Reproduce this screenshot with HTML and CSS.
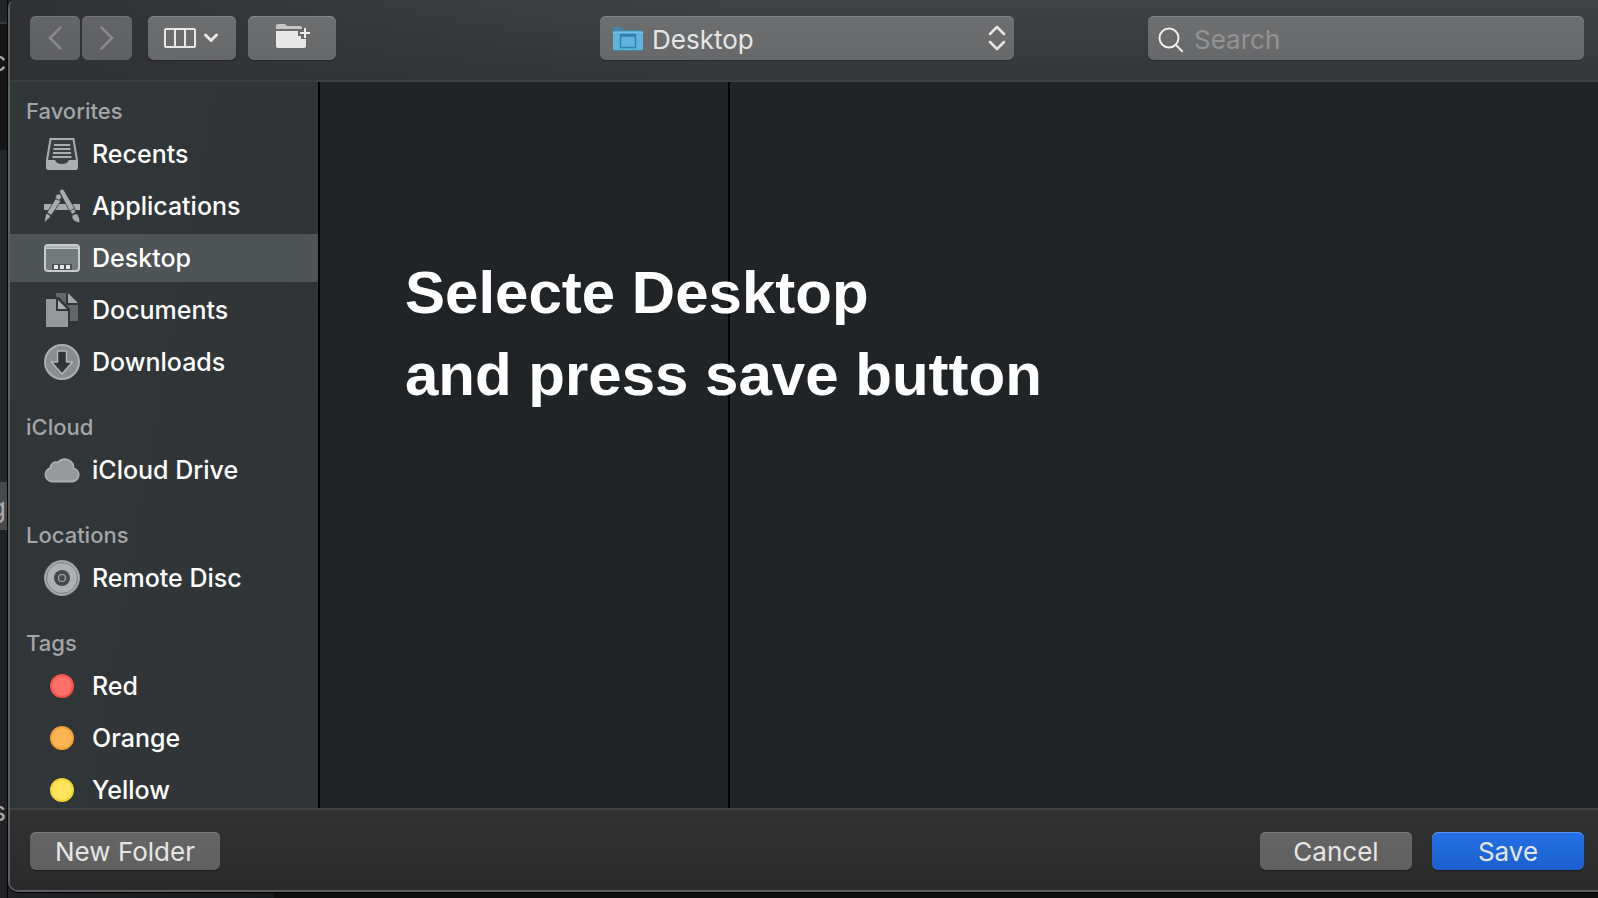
FILE: index.html
```html
<!DOCTYPE html>
<html lang="en">
<head>
<meta charset="utf-8">
<title>Save</title>
<link rel="stylesheet" href="styles.css">
</head>
<body>
<div class="backdrop" aria-hidden="true">
  <div class="back-top"></div>
  <div class="back-dark"><span class="back-text">c</span></div>
  <div class="back-mid"></div>
  <div class="back-selected"><span class="back-text">g</span></div>
  <div class="back-low"><span class="back-text">s</span></div>
</div>
<main class="dialog">
  <header class="toolbar">
    <div class="tools">
      <div class="nav">
        <button class="btn nav-btn" aria-label="Back"><svg width="14" height="24" viewBox="0 0 14 24"><path d="M12.500 1.500 2 12l10.500 10.500"/></svg></button>
        <button class="btn nav-btn" aria-label="Forward"><svg width="14" height="24" viewBox="0 0 14 24"><path d="M1.500 1.500 12 12 1.500 22.500"/></svg></button>
      </div>
      <button class="btn tool-btn" aria-label="View"><svg width="56" height="22" viewBox="0 0 56 22" fill="none" stroke="#e8e8e8" stroke-width="2"><rect x="1" y="2" width="30" height="18" rx="1"/><path d="M11 2v18M21 2v18"/><path d="m41.500 8 5.500 5.500L52.500 8" stroke-width="3" stroke-linecap="round" stroke-linejoin="round"/></svg></button>
      <button class="btn tool-btn" aria-label="New folder"><svg class="new-folder" width="36" height="26" viewBox="0 0 36 26"><path d="M2 6V3q0-2 2-2h7l2 2h13q2 0 2 2v1z" fill="#c6c6c6"/><path d="M2 8h22v5h3v3h5v7q0 2-2 2H4q-2 0-2-2z" fill="#e8e8e8"/><path d="M31 4v12M24 10h12" stroke="#67686a" stroke-width="5"/><path d="M31 5v10M26 10h10" stroke="#eee" stroke-width="2"/></svg></button>
    </div>
    <div class="location">
      <svg class="loc-folder" width="32" height="26" viewBox="0 0 32 26"><path d="M1 6V3q0-2 2-2h6l3 3h17q2 0 2 2v1H1z" fill="#3f86aa"/><path d="M1 6h30v17q0 2-2 2H3q-2 0-2-2z" fill="#5db3dc"/><path d="M1 6h30" stroke="#84cff0"/><path d="M1 24.500h30" stroke="#4587a5"/><path d="M8.500 8.500h15v13h-15zM9 10h14" fill="none" stroke="#327eae" stroke-width="1.400"/></svg>
      <select class="btn loc-select" aria-label="Where"><option>Desktop</option></select>
      <svg class="loc-arrows" width="18" height="26" viewBox="0 0 18 26"><path d="m2 9 7-7 7 7M2 17l7 7 7-7" fill="none" stroke="#e4e4e4" stroke-width="2.600" stroke-linecap="round" stroke-linejoin="round"/></svg>
    </div>
    <div class="search-side">
      <div class="search">
        <svg class="search-icon" width="26" height="26" viewBox="0 0 26 26"><circle cx="11" cy="11" r="9.500"/><path d="m17.700 17.700 7 7"/></svg>
        <input class="btn search-input" type="text" placeholder="Search" aria-label="Search">
      </div>
    </div>
  </header>
  <div class="content">
    <nav class="sidebar">
      <h2 class="group">Favorites</h2>
      <a class="item" href="#"><svg width="36" height="36" viewBox="0 0 36 36"><path d="M6.500 3h23l3.500 21v7.500q0 1.500-1.500 1.500h-27Q3 33 3 31.500V24z" fill="#3a3f42" stroke="#aaaeb0" stroke-width="2"/><path d="M2.500 24H11q1.500 4 7 4t7-4h8.500l-.5 8q0 2-2 2H5q-2 0-2-2z" fill="#aaaeb0"/><path d="M10 9h16M9.500 13h17M9 17h18M8.500 21h19" stroke="#aaaeb0" stroke-width="2"/></svg>Recents</a>
      <a class="item" href="#"><svg width="36" height="36" viewBox="0 0 36 36" fill="#a7abad" stroke="#303538" stroke-width=".8"><path d="M0 16h36v6H0z" stroke="none"/><path d="m12 10 5 3L5.500 30 0 35l1.500-8z"/><circle cx="14.500" cy="9" r="3"/><path d="m3 25 4.500 3" fill="none" stroke-width="1.500"/><path d="M15.500 4q0-3 3-3 1 0 2 2l10.500 18-5 3z"/><path d="m26 23 4.500-2.500L32 24l-4 2.500z"/><path d="M28 27.500q4-3.500 6.500 0 1.500 3 1.500 7.500-6.500-1-8-5z"/></svg>Applications</a>
      <a class="item selected" href="#" aria-current="page"><svg width="36" height="36" viewBox="0 0 36 36"><rect x="1" y="5" width="34" height="26" rx="3" fill="#74797c" stroke="#c7cccf" stroke-width="2"/><path d="M1 6h34v3H1z" fill="#c7cccf"/><path d="M2 7h32" stroke="#92989b"/><path d="M8 24h20v6H8z" fill="#4a5052"/><path d="M10 25h4v4h-4zM16 25h4v4h-4zM22 25h4v4h-4z" fill="#e5e8e9"/></svg>Desktop</a>
      <a class="item" href="#"><svg width="36" height="36" viewBox="0 0 36 36"><path d="M12 1h10v12h12v16h-8V17L15 5h-3z" fill="#62676a"/><path d="M24 1v10h10z" fill="#a5a9ab"/><path d="M2 7h10v12h12v16H2z" fill="#95999c"/><path d="M14 8v9h9z" fill="#abafb1"/></svg>Documents</a>
      <a class="item" href="#"><svg width="36" height="36" viewBox="0 0 36 36"><circle cx="18" cy="18" r="17" fill="#888d90" stroke="#acb0b2" stroke-width="2"/><path d="M13.500 7h9v11h6L18 30 7.500 18h6z" fill="#303538" stroke="#b2b6b8" stroke-width="1.500" stroke-linejoin="round"/></svg>Downloads</a>
      <h2 class="group">iCloud</h2>
      <a class="item" href="#"><svg width="36" height="36" viewBox="0 0 36 36"><path d="M8 29.500a7 7 0 0 1-1.500-13.700 5.500 5.500 0 0 1 7.500-5.300 8.700 8.700 0 0 1 15.500 5.800A6.700 6.700 0 0 1 28.500 29.500z" fill="#95999c" stroke="#acb0b2" stroke-width="1.800"/></svg>iCloud Drive</a>
      <h2 class="group">Locations</h2>
      <a class="item" href="#"><svg width="36" height="36" viewBox="0 0 36 36" fill="none"><circle cx="18" cy="18" r="17.500" fill="#abb0b2" stroke="#979c9e"/><circle cx="18" cy="18" r="15.500" stroke="#7b8083"/><circle cx="18" cy="18" r="8" fill="#45494c"/><circle cx="18" cy="18" r="3.500" stroke="#a6abad" stroke-width="1.200"/></svg>Remote Disc</a>
      <h2 class="group">Tags</h2>
      <a class="item" href="#"><span class="tag red"></span>Red</a>
      <a class="item" href="#"><span class="tag orange"></span>Orange</a>
      <a class="item" href="#"><span class="tag yellow"></span>Yellow</a>
    </nav>
    <section class="browser">
      <div class="column"></div>
      <div class="column-rest"></div>
      <p class="caption">Selecte Desktop<br>and press save button</p>
    </section>
  </div>
  <footer class="footer">
    <button class="btn action new">New Folder</button>
    <button class="btn action">Cancel</button>
    <button class="btn action save">Save</button>
  </footer>
</main>
</body>
</html>
```
FILE: styles.css
```css
* { box-sizing: border-box; }
body {
  margin: 0;
  height: 100vh;
  display: flex;
  overflow: hidden;
  background: linear-gradient(90deg, #202226 0, #17191a 274px, #0e0e0e 274px);
  color: #fff;
  font-family: Inter, "Liberation Sans", sans-serif;
  font-size: 26px;
}
.backdrop {
  width: 8px;
  flex: none;
  display: flex;
  flex-direction: column;
  overflow: hidden;
  border-right: 1px solid #050505;
  color: #aaa;
}
.back-top { height: 24px; background: #202528; border-bottom: 2px solid #34383a; }
.back-dark { height: 126px; background: #151515; padding-top: 22px; }
.back-mid { height: 332px; background: #23282b; }
.back-selected { height: 48px; background: #48494b; padding-top: 10px; }
.back-low { flex: 1; background: #202226; padding-top: 266px; }
.back-text { display: flex; justify-content: flex-end; line-height: 32px; width: 6px; }
.dialog {
  flex: 1;
  min-width: 0;
  margin-bottom: 6px;
  display: flex;
  flex-direction: column;
  border: 2px solid #5d5f60;
  border-width: 0 0 2px 2px;
  border-radius: 8px 0 0 10px;
  overflow: hidden;
  background: #202427;
  box-shadow: 0 1px #000;
}
.toolbar {
  display: grid;
  grid-template-columns: 1fr 414px 1fr;
  height: 82px;
  padding: 16px 14px 0 20px;
  background: linear-gradient(90deg, #303133 0, #303133a0 16%, #30313300 45%), linear-gradient(#3f4345, #33373a);
  border-bottom: 2px solid #3b3f41;
}
.tools { display: flex; gap: 12px; }
.nav { display: flex; gap: 2px; margin-right: 4px; }
.btn {
  height: 44px;
  border: 0;
  border-radius: 6px;
  background: linear-gradient(#6d6f70, #67686a);
  box-shadow: inset 0 1px #858789, 0 1px 1px #0004;
  color: #e6e6e6;
  font: inherit;
}
.nav-btn, .tool-btn { display: flex; align-items: center; justify-content: center; padding: 0; }
.nav-btn { width: 50px; background: linear-gradient(#646567, #5f6062); box-shadow: inset 0 1px #747678; }
.nav-btn svg { fill: none; stroke: #88898b; stroke-width: 2.500px; stroke-linecap: round; }
.tool-btn { width: 88px; }
.new-folder { margin-bottom: 4px; }
.location, .search { position: relative; }
.loc-select { width: 100%; appearance: none; padding: 2px 40px 0 52px; }
.loc-folder { position: absolute; left: 12px; top: 10px; }
.loc-arrows { position: absolute; right: 8px; top: 9px; pointer-events: none; }
.search-side { display: flex; justify-content: flex-end; }
.search { width: 436px; }
.search-input { width: 100%; padding: 2px 12px 0 46px; }
.search-input::placeholder { color: #929394; opacity: 1; }
.search-icon { position: absolute; left: 10px; top: 11px; fill: none; stroke: #eee; stroke-width: 2px; }
.content { flex: 1; min-height: 0; display: flex; }
.sidebar {
  width: 310px;
  flex: none;
  overflow: hidden;
  border-right: 2px solid #000;
  background: linear-gradient(100deg, #313639, #303436);
}
.group {
  margin: 0;
  padding: 21px 0 0 16px;
  height: 56px;
  color: #a3a6a8;
  font-size: 22px;
  font-weight: 500;
  line-height: 32px;
}
.group:first-child { padding-top: 13px; height: 48px; }
.item {
  display: flex;
  align-items: center;
  gap: 12px;
  height: 48px;
  margin-bottom: 4px;
  padding-left: 34px;
  color: #fff;
  font-size: 25px;
  font-weight: 500;
  text-decoration: none;
}
.item svg { flex: none; }
.selected { background: #4e5356; }
.tag { width: 24px; height: 24px; margin: 0 6px; border-radius: 50%; border: 2px solid; }
.red { background: #ff706b; border-color: #f9504b; }
.orange { background: #ffb454; border-color: #f9a034; }
.yellow { background: #ffe45c; border-color: #f2d334; }
.browser { flex: 1; display: flex; position: relative; }
.column { width: 410px; border-right: 2px solid #000; }
.column-rest { flex: 1; }
.caption {
  position: absolute;
  left: 85px;
  top: 170px;
  margin: 0;
  font: bold 60px/82px "Liberation Sans", sans-serif;
  white-space: nowrap;
}
.footer {
  display: flex;
  align-items: flex-start;
  gap: 20px;
  height: 82px;
  padding: 22px 14px 0 20px;
  border-top: 2px solid #414243;
  background: linear-gradient(#323232, #2a2a2a);
}
.action { width: 152px; height: 38px; padding: 0; background: linear-gradient(#656565, #606060); box-shadow: inset 0 1px #7d7d7d, 0 1px 1px #0006; }
.new { width: 190px; margin-right: auto; }
.save { background: linear-gradient(#2270e6, #1b60cc); box-shadow: inset 0 1px #5a95ee, 0 1px 1px #0006; }
```
